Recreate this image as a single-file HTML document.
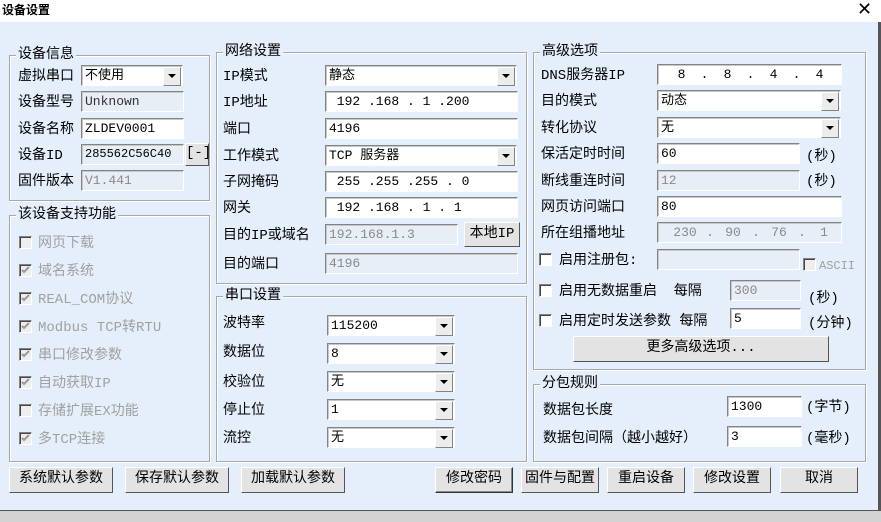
<!DOCTYPE html>
<html><head><meta charset="utf-8"><style>
*{margin:0;padding:0;box-sizing:border-box}
body{width:881px;height:522px;position:relative;overflow:hidden;background:#e5effb;font-family:"Liberation Mono","Noto Sans CJK SC",monospace;font-size:13px;color:#000}
.a{position:absolute;white-space:nowrap;line-height:16px;margin-top:2px}
.g{position:absolute;border:1px solid #a8a8a8;box-shadow:inset 1px 1px 0 #fff,1px 1px 0 #fff}
.gt{position:absolute;top:-9px;left:6px;background:#e5effb;padding:0 2px;line-height:16px;font-size:14px}
.in{position:absolute;height:21px;background:#fff;border:1px solid;border-color:#838383 #fff #fff #838383;box-shadow:inset 1px 1px 0 #c8c8c8;padding-left:3px;line-height:19px;font-size:13px;white-space:nowrap;overflow:hidden}
.in span{display:inline-block;text-align:center}
.dis{background:#e7eef7;color:#8a8a8a}
.cb{position:absolute;height:21px;background:#fff;border:1px solid;border-color:#838383 #fff #fff #838383;box-shadow:inset 1px 1px 0 #c8c8c8;padding-left:3px;line-height:19px;font-size:13px}
.cb::after{content:"";position:absolute;right:1px;top:1px;width:16px;height:17px;background:#ececec;border:1px solid;border-color:#fff #838383 #838383 #fff}
.cb::before{content:"";position:absolute;right:6px;top:8px;border-left:4px solid transparent;border-right:4px solid transparent;border-top:4px solid #000;z-index:2}
.bt{position:absolute;height:26px;background:#e3e3e3;border:1px solid;border-color:#fff #555 #555 #fff;text-align:center;line-height:23px;font-size:14px}
.ck{position:absolute;width:13px;height:13px;background:#fff;border:1px solid;border-color:#838383 #fff #fff #838383;box-shadow:inset 1px 1px 0 #444}
.ckd{background:#eee}
.ckd svg{position:absolute;left:1px;top:1px}
.gr{color:#a0a0a0}
.l{font-size:14px}
</style></head><body>
<div style="position:absolute;left:0;top:0;width:881px;height:22px;background:#fff"></div>
<div class="a" style="left:2px;top:0px;font-size:12px;font-weight:bold;font-family:'Noto Sans CJK SC',sans-serif">设备设置</div>
<div class="a" style="left:857px;top:0px;font-size:18px;font-family:'DejaVu Sans',sans-serif">✕</div>
<div style="position:absolute;left:878px;top:22px;width:3px;height:500px;background:#555"></div>
<div style="position:absolute;left:0;top:510px;width:881px;height:12px;background:#d2d2d2;border-top:1px solid #555"></div>

<!-- 设备信息 -->
<div class="g" style="left:9px;top:55px;width:201px;height:146px"><span class="gt">设备信息</span></div>
<div class="a l" style="left:18px;top:67px">虚拟串口</div>
<div class="cb" style="left:81px;top:65px;width:102px">不使用</div>
<div class="a l" style="left:18px;top:93px">设备型号</div>
<div class="in dis" style="left:81px;top:91px;width:103px;color:#333">Unknown</div>
<div class="a l" style="left:18px;top:120px">设备名称</div>
<div class="in" style="left:81px;top:118px;width:103px">ZLDEV0001</div>
<div class="a l" style="left:18px;top:146px">设备ID</div>
<div class="in dis" style="left:81px;top:144px;width:103px;color:#000;font-size:12px">285562C56C40</div>
<div class="bt" style="left:185px;top:143px;width:24px;height:23px;line-height:19px">[-]</div>
<div class="a l" style="left:18px;top:172px">固件版本</div>
<div class="in dis" style="left:81px;top:170px;width:103px">V1.441</div>

<!-- 支持功能 -->
<div class="g" style="left:9px;top:215px;width:201px;height:247px"><span class="gt">该设备支持功能</span></div>
<div class="ck ckd" style="left:19px;top:236px"></div><div class="a l gr" style="left:38px;top:234px">网页下载</div>
<div class="ck ckd" style="left:19px;top:264px"><svg width="9" height="9"><path d="M1 4l2 2 5-5" stroke="#999" stroke-width="2" fill="none"/></svg></div><div class="a l gr" style="left:38px;top:262px">域名系统</div>
<div class="ck ckd" style="left:19px;top:292px"><svg width="9" height="9"><path d="M1 4l2 2 5-5" stroke="#999" stroke-width="2" fill="none"/></svg></div><div class="a l gr" style="left:38px;top:290px">REAL_COM协议</div>
<div class="ck ckd" style="left:19px;top:320px"><svg width="9" height="9"><path d="M1 4l2 2 5-5" stroke="#999" stroke-width="2" fill="none"/></svg></div><div class="a l gr" style="left:38px;top:318px">Modbus TCP转RTU</div>
<div class="ck ckd" style="left:19px;top:348px"><svg width="9" height="9"><path d="M1 4l2 2 5-5" stroke="#999" stroke-width="2" fill="none"/></svg></div><div class="a l gr" style="left:38px;top:346px">串口修改参数</div>
<div class="ck ckd" style="left:19px;top:376px"><svg width="9" height="9"><path d="M1 4l2 2 5-5" stroke="#999" stroke-width="2" fill="none"/></svg></div><div class="a l gr" style="left:38px;top:374px">自动获取IP</div>
<div class="ck ckd" style="left:19px;top:404px"></div><div class="a l gr" style="left:38px;top:402px">存储扩展EX功能</div>
<div class="ck ckd" style="left:19px;top:432px"><svg width="9" height="9"><path d="M1 4l2 2 5-5" stroke="#999" stroke-width="2" fill="none"/></svg></div><div class="a l gr" style="left:38px;top:430px">多TCP连接</div>

<!-- 网络设置 -->
<div class="g" style="left:216px;top:52px;width:311px;height:232px"><span class="gt">网络设置</span></div>
<div class="a l" style="left:223px;top:67px">IP模式</div>
<div class="cb" style="left:325px;top:65px;width:192px">静态</div>
<div class="a l" style="left:223px;top:93px">IP地址</div>
<div class="in" style="left:325px;top:91px;width:193px">&nbsp;192 .168 . 1 .200</div>
<div class="a l" style="left:223px;top:120px">端口</div>
<div class="in" style="left:325px;top:118px;width:193px">4196</div>
<div class="a l" style="left:223px;top:147px">工作模式</div>
<div class="cb" style="left:325px;top:145px;width:192px">TCP 服务器</div>
<div class="a l" style="left:223px;top:173px">子网掩码</div>
<div class="in" style="left:325px;top:171px;width:193px">&nbsp;255 .255 .255 . 0</div>
<div class="a l" style="left:223px;top:199px">网关</div>
<div class="in" style="left:325px;top:197px;width:193px">&nbsp;192 .168 . 1 . 1</div>
<div class="a l" style="left:223px;top:226px">目的IP或域名</div>
<div class="in dis" style="left:325px;top:224px;width:133px">192.168.1.3</div>
<div class="bt" style="left:464px;top:222px;width:56px;height:25px">本地IP</div>
<div class="a l" style="left:223px;top:255px">目的端口</div>
<div class="in dis" style="left:325px;top:253px;width:193px">4196</div>

<!-- 串口设置 -->
<div class="g" style="left:216px;top:296px;width:311px;height:166px"><span class="gt">串口设置</span></div>
<div class="a l" style="left:223px;top:314px">波特率</div>
<div class="cb" style="left:327px;top:315px;width:128px">115200</div>
<div class="a l" style="left:223px;top:343px">数据位</div>
<div class="cb" style="left:327px;top:343px;width:128px">8</div>
<div class="a l" style="left:223px;top:373px">校验位</div>
<div class="cb" style="left:327px;top:371px;width:128px">无</div>
<div class="a l" style="left:223px;top:401px">停止位</div>
<div class="cb" style="left:327px;top:399px;width:128px">1</div>
<div class="a l" style="left:223px;top:429px">流控</div>
<div class="cb" style="left:327px;top:427px;width:128px">无</div>

<!-- 高级选项 -->
<div class="g" style="left:533px;top:52px;width:333px;height:318px"><span class="gt">高级选项</span></div>
<div class="a l" style="left:541px;top:66px">DNS服务器IP</div>
<div class="in" style="left:657px;top:64px;width:185px;padding-left:12px"><span style="width:23px">8</span><span style="width:23px">.</span><span style="width:23px">8</span><span style="width:23px">.</span><span style="width:23px">4</span><span style="width:23px">.</span><span style="width:23px">4</span></div>
<div class="a l" style="left:541px;top:92px">目的模式</div>
<div class="cb" style="left:657px;top:90px;width:184px">动态</div>
<div class="a l" style="left:541px;top:119px">转化协议</div>
<div class="cb" style="left:657px;top:117px;width:184px">无</div>
<div class="a l" style="left:541px;top:145px">保活定时时间</div>
<div class="in" style="left:657px;top:143px;width:143px">60</div>
<div class="a l" style="left:806px;top:147px">(秒)</div>
<div class="a l" style="left:541px;top:172px">断线重连时间</div>
<div class="in dis" style="left:657px;top:170px;width:143px">12</div>
<div class="a l" style="left:806px;top:172px">(秒)</div>
<div class="a l" style="left:541px;top:198px">网页访问端口</div>
<div class="in" style="left:657px;top:196px;width:185px">80</div>
<div class="a l" style="left:541px;top:224px">所在组播地址</div>
<div class="in dis" style="left:657px;top:222px;width:185px;padding-left:12px"><span style="width:30px">230</span><span style="width:20px">.</span><span style="width:26px">90</span><span style="width:20px">.</span><span style="width:26px">76</span><span style="width:20px">.</span><span style="width:24px">1</span></div>
<div class="ck" style="left:539px;top:253px"></div><div class="a l" style="left:559px;top:251px">启用注册包:</div>
<div class="in dis" style="left:657px;top:249px;width:143px"></div>
<div class="ck ckd" style="left:803px;top:258px"></div><div class="a gr" style="left:819px;top:256px;font-size:12px">ASCII</div>
<div class="ck" style="left:539px;top:284px"></div><div class="a l" style="left:559px;top:282px">启用无数据重启&nbsp;&nbsp;每隔</div>
<div class="in dis" style="left:730px;top:280px;width:71px">300</div>
<div class="a l" style="left:808px;top:289px">(秒)</div>
<div class="ck" style="left:539px;top:314px"></div><div class="a l" style="left:559px;top:312px">启用定时发送参数 每隔</div>
<div class="in" style="left:730px;top:308px;width:71px">5</div>
<div class="a l" style="left:808px;top:314px">(分钟)</div>
<div class="bt" style="left:573px;top:336px;width:256px">更多高级选项...</div>

<!-- 分包规则 -->
<div class="g" style="left:533px;top:384px;width:333px;height:78px"><span class="gt">分包规则</span></div>
<div class="a l" style="left:543px;top:401px">数据包长度</div>
<div class="in" style="left:727px;top:396px;width:75px">1300</div>
<div class="a l" style="left:806px;top:398px">(字节)</div>
<div class="a l" style="left:543px;top:429px">数据包间隔（越小越好）</div>
<div class="in" style="left:727px;top:426px;width:75px">3</div>
<div class="a l" style="left:806px;top:429px">(毫秒)</div>

<!-- buttons -->
<div class="bt" style="left:9px;top:467px;width:104px">系统默认参数</div>
<div class="bt" style="left:125px;top:467px;width:104px">保存默认参数</div>
<div class="bt" style="left:241px;top:467px;width:104px">加载默认参数</div>
<div class="bt" style="left:435px;top:467px;width:78px;border-color:#fff #333 #333 #fff;box-shadow:inset -1px -1px 0 #888">修改密码</div>
<div class="bt" style="left:521px;top:467px;width:78px">固件与配置</div>
<div class="bt" style="left:607px;top:467px;width:78px">重启设备</div>
<div class="bt" style="left:693px;top:467px;width:78px">修改设置</div>
<div class="bt" style="left:780px;top:467px;width:78px">取消</div>
</body></html>
